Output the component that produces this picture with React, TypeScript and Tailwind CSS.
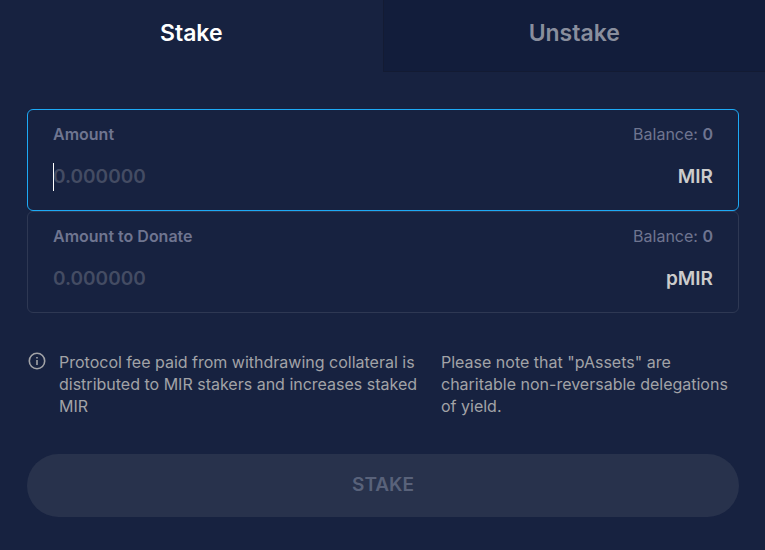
import React, { useState } from "react";

type FieldProps = {
  id: string;
  label: string;
  symbol: string;
  active?: boolean;
};

function AmountField({ id, label, symbol, active = false }: FieldProps) {
  const [value, setValue] = useState("");
  return (
    <div
      className={`rounded-md border px-[25px] pt-3 pb-[19px] ${
        active ? "border-[#1daaf6]" : "border-[#2e3853]"
      }`}
    >
      <div className="flex items-center justify-between text-base leading-6 text-[#6f7590]">
        <label htmlFor={id} className="font-semibold">
          {label}
        </label>
        <span>
          Balance: <strong className="font-semibold">0</strong>
        </span>
      </div>
      <div className="mt-[17px] flex items-center justify-between text-[19px] leading-7 font-semibold">
        <div className="relative min-w-0 flex-1">
          {active && value === "" && (
            <span className="absolute top-0 left-0 h-7 w-px bg-white" />
          )}
          <input
            id={id}
            value={value}
            onChange={(e) => setValue(e.target.value)}
            placeholder="0.000000"
            inputMode="decimal"
            autoComplete="off"
            className="block h-7 w-full bg-transparent text-[#cccccc] outline-none placeholder:text-[#444c63]"
          />
        </div>
        <span className="text-[#cccccc]">{symbol}</span>
      </div>
    </div>
  );
}

export default function App() {
  return (
    <main className="min-h-screen bg-[#172240] font-['Inter','Open_Sans',sans-serif]">
      <div className="grid grid-cols-2 text-[23px] leading-8 font-semibold">
        <button type="button" className="h-18 pb-1.5 text-white">
          Stake
        </button>
        <button
          type="button"
          className="h-18 border-b border-l border-[#131b33] bg-[#121d3b] pb-1.5 text-[#898e9d]"
        >
          Unstake
        </button>
      </div>

      <form className="pt-[37px] pr-[26px] pb-[29px] pl-[27px]" onSubmit={(e) => e.preventDefault()}>
        <AmountField id="amount" label="Amount" symbol="MIR" active />
        <AmountField id="donate" label="Amount to Donate" symbol="pMIR" />

        <div className="mt-[38px] flex text-base leading-[22px] text-[#a2a3a7]">
          <svg
            viewBox="0 0 20 20"
            className="mr-3 h-5 w-5 shrink-0"
            fill="none"
            stroke="currentColor"
            strokeWidth="1.6"
            aria-hidden="true"
          >
            <circle cx="10" cy="10" r="7.7" />
            <path d="M10 9v5M10 6v1.6" />
          </svg>
          <div className="grid flex-1 grid-cols-[364fr_298fr] gap-[18px]">
            <p>
              Protocol fee paid from withdrawing collateral is distributed to MIR stakers and
              increases staked MIR
            </p>
            <p className="pr-1">
              Please note that "pAssets" are charitable non-reversable delegations of yield.
            </p>
          </div>
        </div>

        <button
          type="submit"
          disabled
          className="mt-[37px] h-[63px] w-full rounded-full bg-[#28324c] text-[19px] font-semibold text-[#59627a]"
        >
          STAKE
        </button>
      </form>
    </main>
  );
}
